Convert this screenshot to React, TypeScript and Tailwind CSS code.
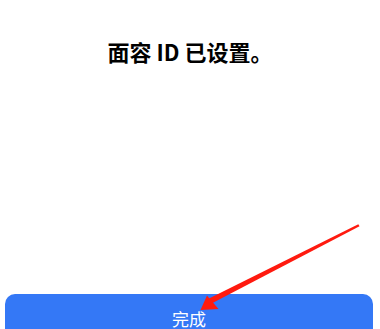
import React from "react";

export default function App() {
  return (
    <div className="relative w-[380px] h-[329px] overflow-hidden bg-white" style={{ fontFamily: '"Noto Sans CJK SC", "Liberation Sans", sans-serif' }}>
      <div className="flex flex-col h-full">
        <div className="pt-[36px] text-center text-[22px] font-bold text-black leading-[30px]">面容 ID 已设置。</div>
        <div className="flex-1" />
        <div className="px-[5px] pr-[7px]">
          <div className="h-[35px] rounded-t-[10px] bg-[#3478f6] flex justify-center pt-[12px]">
            <span className="text-white text-[17px] leading-[26px]">完成</span>
          </div>
        </div>
      </div>
      <svg className="absolute inset-0" width="380" height="329" viewBox="0 0 380 329">
        <polygon points="358.3,224.3 359.5,226.2 212.5,303 209,298.5" fill="#ff1a0f" />
        <polygon points="200.5,310 207,295.5 218.5,309" fill="#ff1a0f" />
      </svg>
    </div>
  );
}
